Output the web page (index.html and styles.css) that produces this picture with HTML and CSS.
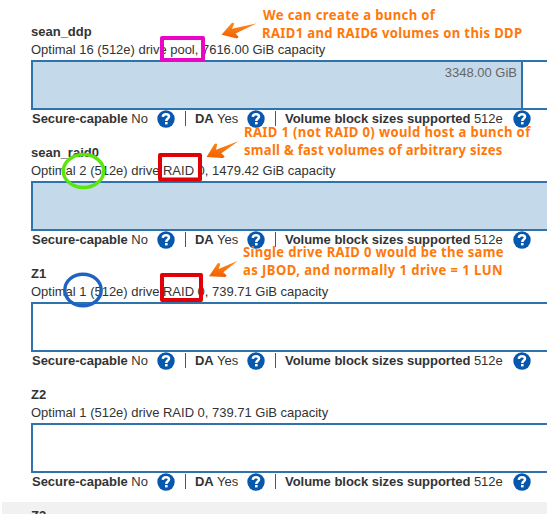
FILE: index.html
```
<!DOCTYPE html>
<html lang="en">
<head>
<meta charset="utf-8">
<title>Pools and volume groups</title>
<link rel="stylesheet" href="styles.css">
</head>
<body>
<svg class="defs" width="0" height="0" aria-hidden="true">
  <defs>
    <linearGradient id="flame" x1="0" y1="0" x2="0" y2="1"><stop offset="0" stop-color="#ff8a1c"/><stop offset="1" stop-color="#f06000"/></linearGradient>
    <symbol id="help" viewBox="0 0 18 18">
      <circle cx="9" cy="9" r="8.7" fill="#0757ad"/>
      <path d="M5.800 6.900C6 5 7.200 4.300 9 4.300c1.800 0 3 .8 3 2.300 0 2-2.700 2-2.700 4.300" fill="none" stroke="#fff" stroke-width="2.500"/>
      <rect x="8" y="12" width="2.600" height="2.400" fill="#fff"/>
    </symbol>
  </defs>
</svg>
<main class="list">
  <section class="group">
    <h2 class="name">sean_ddp</h2>
    <p class="summary">Optimal 16 (512e) drive pool, 7616.00 GiB capacity</p>
    <div class="bar"><div class="used partial">3348.00 GiB</div></div>
    <div class="facts">
      <div class="fact secure"><span><b>Secure-capable</b> No</span><svg class="help"><use href="#help"/></svg></div>
      <div class="fact da"><span><b>DA</b> Yes</span><svg class="help"><use href="#help"/></svg></div>
      <div class="fact blocks"><span><b>Volume block sizes supported</b> 512e</span><svg class="help"><use href="#help"/></svg></div>
    </div>
  </section>
  <section class="group">
    <h2 class="name">sean_raid0</h2>
    <p class="summary">Optimal 2 (512e) drive RAID 0, 1479.42 GiB capacity</p>
    <div class="bar"><div class="used"></div></div>
    <div class="facts">
      <div class="fact secure"><span><b>Secure-capable</b> No</span><svg class="help"><use href="#help"/></svg></div>
      <div class="fact da"><span><b>DA</b> Yes</span><svg class="help"><use href="#help"/></svg></div>
      <div class="fact blocks"><span><b>Volume block sizes supported</b> 512e</span><svg class="help"><use href="#help"/></svg></div>
    </div>
  </section>
  <section class="group">
    <h2 class="name">Z1</h2>
    <p class="summary">Optimal 1 (512e) drive RAID 0, 739.71 GiB capacity</p>
    <div class="bar"></div>
    <div class="facts">
      <div class="fact secure"><span><b>Secure-capable</b> No</span><svg class="help"><use href="#help"/></svg></div>
      <div class="fact da"><span><b>DA</b> Yes</span><svg class="help"><use href="#help"/></svg></div>
      <div class="fact blocks"><span><b>Volume block sizes supported</b> 512e</span><svg class="help"><use href="#help"/></svg></div>
    </div>
  </section>
  <section class="group">
    <h2 class="name">Z2</h2>
    <p class="summary">Optimal 1 (512e) drive RAID 0, 739.71 GiB capacity</p>
    <div class="bar"></div>
    <div class="facts">
      <div class="fact secure"><span><b>Secure-capable</b> No</span><svg class="help"><use href="#help"/></svg></div>
      <div class="fact da"><span><b>DA</b> Yes</span><svg class="help"><use href="#help"/></svg></div>
      <div class="fact blocks"><span><b>Volume block sizes supported</b> 512e</span><svg class="help"><use href="#help"/></svg></div>
    </div>
  </section>
  <section class="group shaded">
    <h2 class="name">Z3</h2>
  </section>
</main>
<svg class="notes" width="547" height="514" viewBox="0 0 547 514">
  <g fill="none" stroke-linejoin="round">
    <rect x="162" y="38" width="41" height="22" stroke="#e906c4" stroke-width="4"/>
    <rect x="160" y="155" width="40" height="24.500" stroke="#e20008" stroke-width="4"/>
    <rect x="162" y="275" width="39" height="25" stroke="#e20008" stroke-width="4"/>
    <ellipse cx="83.500" cy="171" rx="20.200" ry="16.500" stroke="#5be60b" stroke-width="3.400"/>
    <ellipse cx="83" cy="290" rx="18.200" ry="15.800" stroke="#1f63c1" stroke-width="3.400"/>
  </g>
  <g fill="url(#flame)">
    <path d="M221.500 34.700L231.500 23.200Q233.500 22 234.200 23.800L232 28.700L257 23.300L235.500 33.400L238.500 36.800Q238.300 38.700 236 38.300Z"/>
    <path d="M206.500 156.900L214.500 144Q216.500 142.800 217.200 144.600L216 149.800L238.700 141L221.300 153.300L224.500 156.300Q224.500 158.200 222.300 158Z"/>
    <path d="M209 276.200L217.500 263.600Q219.500 262.400 220.200 264.200L218.700 269L237.700 260.700L223.300 272.200L226.500 275.200Q226.500 277.200 224.500 277Z"/>
  </g>
  <g class="note">
    <text transform="translate(263 20) scale(.9 1)" textLength="191">We can create a bunch of</text>
    <text transform="translate(262 38) scale(.9 1)" textLength="289">RAID1 and RAID6 volumes on this DDP</text>
    <text transform="translate(244 137) scale(.9 1)" textLength="318">RAID 1 (not RAID 0) would host a bunch of</text>
    <text transform="translate(244 155) scale(.9 1)" textLength="287">small &amp; fast volumes of arbitrary sizes</text>
    <text transform="translate(243 257) scale(.9 1)" textLength="289.500">Single drive RAID 0 would be the same</text>
    <text transform="translate(243 275) scale(.9 1)" textLength="288.500">as JBOD, and normally 1 drive = 1 LUN</text>
  </g>
</svg>
</body>
</html>
```
FILE: styles.css
```
* { box-sizing: border-box; }
body {
  margin: 0;
  height: 514px;
  overflow: hidden;
  position: relative;
  background: #fff;
  color: #333;
  font: 13px/18px "Liberation Sans", Arial, sans-serif;
}
.defs { position: absolute; }
.list { height: 514px; overflow: hidden; padding: 18px 0 0 2px; }
.group { height: 121px; padding: 5px 0 0 29px; }
.shaded { background: #f1f1f1; }
.name { margin: 0; font-size: 13px; line-height: 18px; }
.summary {
  margin: 0;
  height: 19px;
  white-space: nowrap;
  letter-spacing: -0.01px;
}
.bar {
  height: 50px;
  border: 2px solid #2f73ad;
  border-right: 0;
  background: #fff;
}
.used {
  height: 100%;
  background: #c4daea;
  color: #666;
  text-align: right;
  padding: 2px 4px;
}
.partial { width: 490px; border-right: 2px solid #2f73ad; }
.facts { display: flex; gap: 20px; height: 17px; padding-left: 1px; }
.fact {
  position: relative;
  display: flex;
  justify-content: space-between;
  height: 17px;
  line-height: 17px;
  letter-spacing: -0.03px;
  white-space: nowrap;
}
.help { width: 18px; height: 18px; flex: none; }
.secure { width: 143px; }
.da { width: 70px; }
.blocks { width: 246px; }
.da::before, .blocks::before {
  content: "";
  position: absolute;
  left: -10px;
  top: 1px;
  width: 1px;
  height: 15px;
  background: #555;
}
.notes { position: absolute; left: 0; top: 0; }
.note {
  fill: #ff780a;
  font: bold 14.5px "Noto Sans", "Open Sans", sans-serif;
}
```
